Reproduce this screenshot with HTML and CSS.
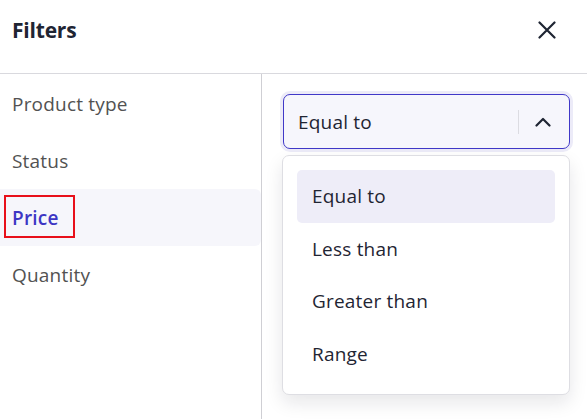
FILE: index.html
```html
<!DOCTYPE html>
<html lang="en">
<head>
<meta charset="utf-8">
<title>Filters</title>
<link rel="stylesheet" href="styles.css">
</head>
<body>
<div class="modal">
  <header class="header">
    <h1 class="title">Filters</h1>
    <button class="close" aria-label="Close">
      <svg width="18" height="18" viewBox="0 0 18 18"><path d="M1.5 1.5 L16.5 16.5 M16.5 1.5 L1.5 16.5" stroke="#1f2533" stroke-width="2.2" stroke-linecap="round"/></svg>
    </button>
  </header>
  <div class="content">
    <nav class="sidebar">
      <div class="nav-item">Product type</div>
      <div class="nav-item">Status</div>
      <div class="nav-item active"><span class="label">Price</span><span class="annot"></span></div>
      <div class="nav-item">Quantity</div>
    </nav>
    <main class="panel">
      <div class="field">
        <div class="select">
          <span class="select-value">Equal to</span>
          <span class="sep"></span>
          <svg class="chev" width="16" height="10" viewBox="0 0 16 10"><path d="M1.5 8.5 L8 2 L14.5 8.5" fill="none" stroke="#1f2533" stroke-width="2.2" stroke-linecap="round" stroke-linejoin="round"/></svg>
        </div>
        <div class="input-behind"></div>
        <ul class="menu">
          <li class="option selected">Equal to</li>
          <li class="option">Less than</li>
          <li class="option">Greater than</li>
          <li class="option">Range</li>
        </ul>
      </div>
    </main>
  </div>
</div>
</body>
</html>
```

FILE: styles.css
```css
* { box-sizing: border-box; }
html, body { margin: 0; padding: 0; background: #fff; }
body {
  font-family: "Open Sans", "Inter", "Liberation Sans", sans-serif;
  width: 587px;
  height: 419px;
  overflow: hidden;
}
.modal { display: flex; flex-direction: column; height: 419px; }
.header {
  height: 74px;
  border-bottom: 1px solid #d9d9de;
  display: flex;
  align-items: center;
  justify-content: space-between;
  padding: 0 31px 14px 12px;
}
.title {
  margin: 0;
  font-size: 21px;
  font-weight: 700;
  letter-spacing: -0.2px;
  color: #1f2533;
}
.close {
  border: 0;
  background: none;
  padding: 0;
  width: 18px;
  height: 18px;
  display: flex;
}
.content { flex: 1; display: flex; }
.sidebar {
  width: 262px;
  border-right: 1px solid #cfcfd4;
  padding-top: 1px;
}
.nav-item {
  height: 57px;
  display: flex;
  align-items: center;
  padding-left: 12px;
  font-size: 19px;
  letter-spacing: 0.2px;
  color: #525252;
  position: relative;
}
.nav-item.active {
  background: #f6f6fb;
  color: #3d36c4;
  font-weight: 600;
  border-radius: 0 6px 6px 0;
}
.annot {
  position: absolute;
  left: 4px;
  top: 6px;
  width: 71px;
  height: 43px;
  border: 2px solid #e8101a;
}
.panel { flex: 1; padding: 20px 17px 0 20px; }
.field { position: relative; }
.select {
  height: 55px;
  margin-left: 1px;
  border: 1px solid #4038c8;
  border-radius: 7px;
  background: #f6f6fc;
  box-shadow: 0 0 0 3px #ecebf8;
  display: flex;
  align-items: center;
  padding: 0 18px 0 14px;
  font-size: 19px;
  letter-spacing: 0.2px;
  color: #1f2533;
}
.select-value { flex: 1; }
.sep {
  width: 1px;
  height: 24px;
  background: #dcdce2;
  margin-right: 16px;
}
.chev { display: block; }
.input-behind {
  margin-top: 21px;
  margin-left: 1px;
  height: 52px;
  border: 1px solid #d9d9de;
  border-radius: 6px;
}
.menu {
  position: absolute;
  left: 0;
  top: 61px;
  width: 288px;
  margin: 0;
  padding: 14px 14px;
  list-style: none;
  background: #fff;
  border: 1px solid #dedee3;
  border-radius: 7px;
  box-shadow: 0 8px 18px rgba(20, 20, 40, 0.1);
}
.option {
  height: 52.5px;
  display: flex;
  align-items: center;
  padding-left: 15px;
  font-size: 19px;
  letter-spacing: 0.2px;
  color: #1f2533;
  border-radius: 5px;
}
.option.selected { background: #eeedf8; }
```
